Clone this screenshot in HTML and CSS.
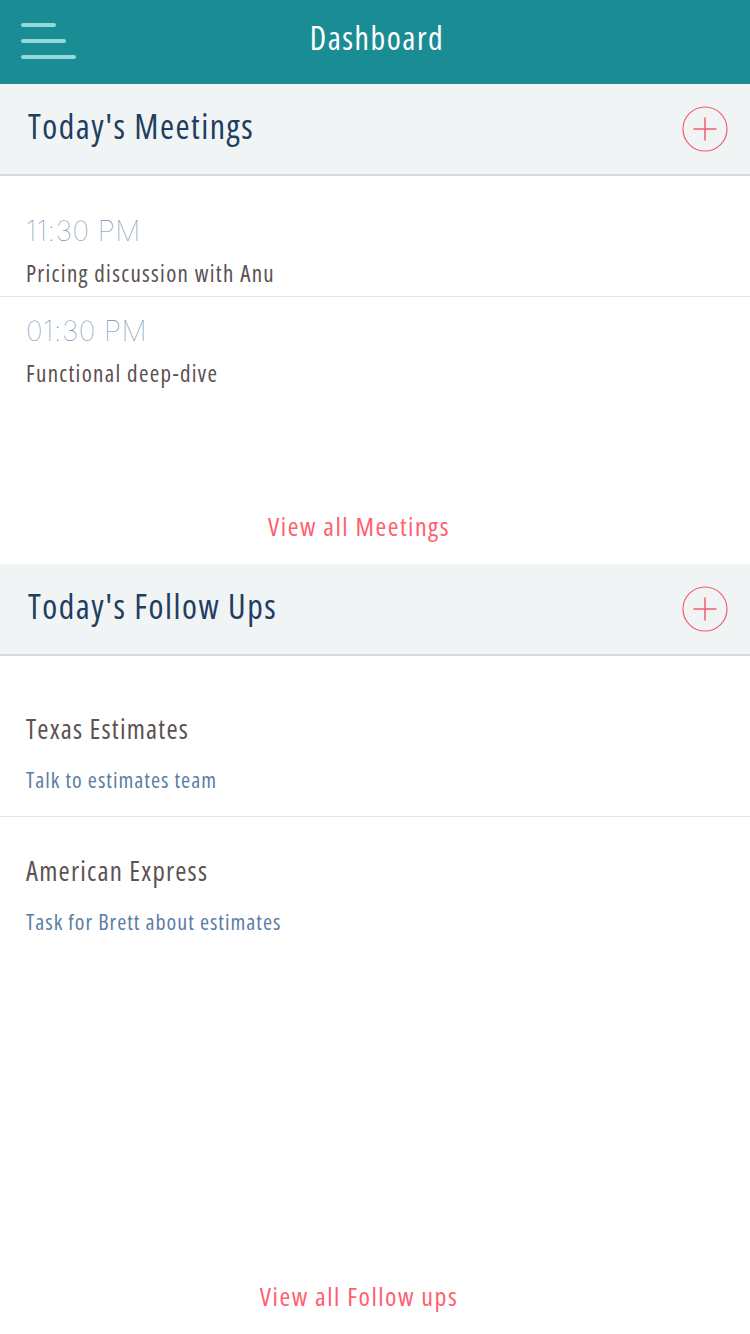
FILE: index.html
```html
<!DOCTYPE html>
<html lang="en">
<head>
<meta charset="utf-8">
<title>Dashboard</title>
<link rel="stylesheet" href="styles.css">
</head>
<body>
<div class="app">
  <header class="topbar">
    <svg class="menu" width="60" height="40" viewBox="0 0 60 40" aria-hidden="true">
      <line x1="4" y1="4" x2="35" y2="4"/>
      <line x1="4" y1="20" x2="45" y2="20"/>
      <line x1="4" y1="36" x2="55" y2="36"/>
    </svg>
    <h1 class="topbar-title">Dashboard</h1>
    <span class="topbar-spacer"></span>
  </header>

  <section class="panel panel-meetings">
    <div class="panel-head">
      <h2 class="panel-title">Today's Meetings</h2>
      <svg class="add" width="46" height="46" viewBox="0 0 46 46" aria-hidden="true">
        <circle cx="23" cy="23" r="22"/>
        <line x1="11.5" y1="23" x2="34.5" y2="23"/>
        <line x1="23" y1="11.5" x2="23" y2="34.5"/>
      </svg>
    </div>
    <div class="panel-body">
      <ul class="list meetings">
        <li class="meeting">
          <div class="meeting-time">11:30 PM</div>
          <div class="meeting-title">Pricing discussion with Anu</div>
        </li>
        <li class="meeting">
          <div class="meeting-time">01:30 PM</div>
          <div class="meeting-title">Functional deep-dive</div>
        </li>
      </ul>
      <a class="view-all" href="#">View all Meetings</a>
    </div>
  </section>

  <section class="panel panel-followups">
    <div class="panel-head">
      <h2 class="panel-title">Today's Follow Ups</h2>
      <svg class="add" width="46" height="46" viewBox="0 0 46 46" aria-hidden="true">
        <circle cx="23" cy="23" r="22"/>
        <line x1="11.5" y1="23" x2="34.5" y2="23"/>
        <line x1="23" y1="11.5" x2="23" y2="34.5"/>
      </svg>
    </div>
    <div class="panel-body">
      <ul class="list followups">
        <li class="followup">
          <div class="followup-title">Texas Estimates</div>
          <div class="followup-sub">Talk to estimates team</div>
        </li>
        <li class="followup">
          <div class="followup-title">American Express</div>
          <div class="followup-sub">Task for Brett about estimates</div>
        </li>
      </ul>
      <a class="view-all" href="#">View all Follow ups</a>
    </div>
  </section>
</div>
</body>
</html>
```

FILE: styles.css
```css
* { box-sizing: border-box; }
html, body { margin: 0; padding: 0; background: #ffffff; }
body {
  width: 750px;
  height: 1334px;
  overflow: hidden;
  font-family: "Open Sans", "Noto Sans", "DejaVu Sans", sans-serif;
  font-stretch: 75%;
}
.app { display: flex; flex-direction: column; height: 1334px; }

/* top bar */
.topbar {
  height: 84px;
  background: #1a8d94;
  display: grid;
  grid-template-columns: 1fr auto 1fr;
  align-items: center;
  padding: 0 15px 0 19px;
}
.menu { margin-bottom: 2px; }
.menu line { stroke: #95d9da; stroke-width: 4; stroke-linecap: round; }
.topbar-title {
  margin: 0 0 9px 0;
  color: #ffffff;
  font-weight: 400;
  font-size: 32px;
  letter-spacing: 1.5px;
  line-height: normal;
}

/* panel */
.panel-head {
  height: 92px;
  background: #f0f4f5;
  border-bottom: 2px solid #d4dadf;
  display: flex;
  align-items: center;
  justify-content: space-between;
  padding: 0 22px 0 28px;
}
.panel-title {
  margin: 0 0 7px 0;
  font-weight: 400;
  font-size: 34px;
  letter-spacing: 1.5px;
  color: #1f3e61;
  line-height: normal;
}
.add circle { fill: none; stroke: #f45d6e; stroke-width: 1.2; }
.add line { stroke: #f45d6e; stroke-width: 1.5; }

.panel-body { display: flex; flex-direction: column; }
.panel-meetings .panel-body { height: 388px; }
.panel-followups { flex: 1; display: flex; flex-direction: column; }
.panel-followups .panel-body { flex: 1; }

.list { list-style: none; margin: 0; padding: 0; }
.meetings { padding-top: 21px; }
.meeting { padding: 17px 26px 8px 26px; border-bottom: 1px solid #ebe4d8; }
.meeting:last-child { border-bottom: none; }
.meeting-time {
  font-family: "Inter", "Lato", sans-serif;
  font-stretch: normal;
  font-weight: 100;
  font-size: 28px;
  line-height: 34px;
  color: #6f8db0;
  letter-spacing: 0.5px;
}
.meeting-title {
  margin-top: 10px;
  font-weight: 400;
  font-size: 23px;
  line-height: 30px;
  color: #5b5050;
  letter-spacing: 1.3px;
}

.followups { padding-top: 19px; }
.followup { padding: 37px 26px 23px 26px; border-bottom: 1px solid #ebe4d8; }
.followup:last-child { border-bottom: none; }
.followup-title {
  font-weight: 400;
  font-size: 27px;
  line-height: 34px;
  color: #5e5353;
  letter-spacing: 1.2px;
}
.followup-sub {
  margin-top: 19px;
  font-weight: 400;
  font-size: 22px;
  line-height: 28px;
  color: #5b7ea3;
  letter-spacing: 1px;
}

.view-all {
  margin-top: auto;
  padding: 0 32px 22px 0;
  text-align: center;
  font-weight: 400;
  font-size: 26px;
  line-height: 32px;
  color: #ff5f6f;
  text-decoration: none;
  letter-spacing: 1.5px;
}
```
